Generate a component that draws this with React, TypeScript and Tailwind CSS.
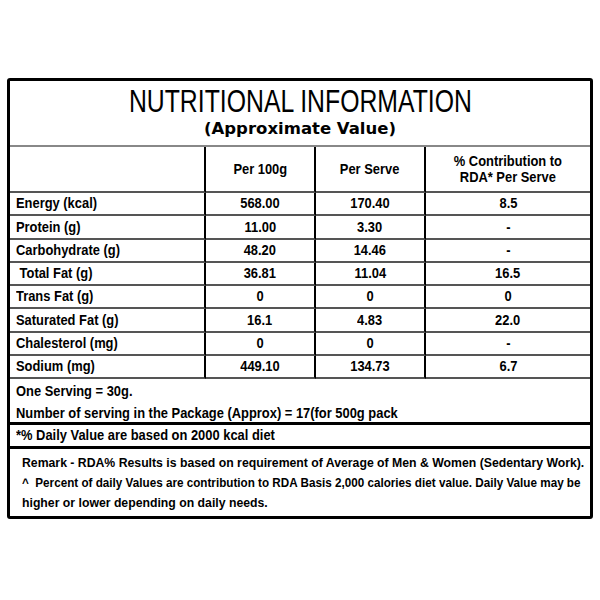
import React from "react";

const rows = [
  { name: "Energy (kcal)", per100: "568.00", serve: "170.40", rda: "8.5" },
  { name: "Protein (g)", per100: "11.00", serve: "3.30", rda: "-" },
  { name: "Carbohydrate (g)", per100: "48.20", serve: "14.46", rda: "-" },
  { name: "\u00a0Total Fat (g)", per100: "36.81", serve: "11.04", rda: "16.5" },
  { name: "Trans Fat (g)", per100: "0", serve: "0", rda: "0" },
  { name: "Saturated Fat (g)", per100: "16.1", serve: "4.83", rda: "22.0" },
  { name: "Chalesterol (mg)", per100: "0", serve: "0", rda: "-" },
  { name: "Sodium (mg)", per100: "449.10", serve: "134.73", rda: "6.7" },
];

// no condensed face installed, so Arial-width text is squeezed sideways
const Sq = ({ children, left }: { children: React.ReactNode; left?: boolean }) => (
  <span className={`inline-block whitespace-pre scale-x-[0.86] ${left ? "origin-left" : "origin-center"}`}>
    {children}
  </span>
);

const cell = "h-[23.25px] border-b-2 border-b-[#555] flex items-center";

export default function App() {
  return (
    <div className="w-[600px] h-[600px] bg-white pt-[78px] pl-[7px]">
      <div className="w-[586px] h-[441px] border-[3px] border-black rounded-[3px] flex flex-col text-black font-['Liberation_Sans',Arial,sans-serif] overflow-hidden">
        {/* Title */}
        <div className="shrink-0 h-[66px] border-b-2 border-[#888] flex flex-col items-center pt-[3px]">
          <h1 className="text-[31px] leading-[36px] font-normal whitespace-nowrap scale-x-[0.8]">
            NUTRITIONAL INFORMATION
          </h1>
          <p className="font-['DejaVu_Sans',sans-serif] font-bold text-[16.5px] leading-[18px]">
            (Approximate Value)
          </p>
        </div>

        {/* Table */}
        <div className="shrink-0 grid grid-cols-[196px_110px_110px_1fr] font-bold text-[15px]">
          <div className="h-[46px] border-r-2 border-b-2 border-r-black border-b-[#555]" />
          <div className="h-[46px] border-r-2 border-b-2 border-r-black border-b-[#555] flex items-center justify-center">
            <Sq>Per 100g</Sq>
          </div>
          <div className="h-[46px] border-r-2 border-b-2 border-r-black border-b-[#555] flex items-center justify-center">
            <Sq>Per Serve</Sq>
          </div>
          <div className="h-[46px] border-b-2 border-[#555] flex flex-col items-center justify-center text-center leading-[16px]">
            <Sq>% Contribution to</Sq>
            <Sq>RDA* Per Serve</Sq>
          </div>

          {rows.map((r) => (
            <React.Fragment key={r.name}>
              <div className={`${cell} border-r-2 border-r-black pl-[6px]`}>
                <Sq left>{r.name}</Sq>
              </div>
              <div className={`${cell} border-r-2 border-r-black justify-center`}>
                <Sq>{r.per100}</Sq>
              </div>
              <div className={`${cell} border-r-2 border-r-black justify-center`}>
                <Sq>{r.serve}</Sq>
              </div>
              <div className={`${cell} justify-center`}>
                <Sq>{r.rda}</Sq>
              </div>
            </React.Fragment>
          ))}
        </div>

        {/* Serving */}
        <div className="shrink-0 h-[46px] border-b-[3px] border-black font-bold text-[15px] leading-[22px] pl-[6px] pt-[1px]">
          <div><Sq left>One Serving = 30g.</Sq></div>
          <div><Sq left>Number of serving in the Package (Approx) = 17(for 500g pack</Sq></div>
        </div>

        <div className="shrink-0 h-[24px] border-b-[3px] border-black font-bold text-[15px] flex items-center pl-[6px]">
          <Sq left>*% Daily Value are based on 2000 kcal diet</Sq>
        </div>

        {/* Remark */}
        <div className="flex-1 font-bold text-[12.5px] leading-[20px] pl-[12px] pt-[4px] [&>p]:whitespace-pre [&>p]:origin-left">
          <p className="scale-x-[0.98]">
            Remark - RDA% Results is based on requirement of Average of Men &amp; Women (Sedentary Work).
          </p>
          <p className="scale-x-[0.935]">
            {"^  Percent of daily Values are contribution to RDA Basis 2,000 calories diet value. Daily Value may be"}
          </p>
          <p className="scale-x-[0.98]">higher or lower depending on daily needs.</p>
        </div>
      </div>
    </div>
  );
}
